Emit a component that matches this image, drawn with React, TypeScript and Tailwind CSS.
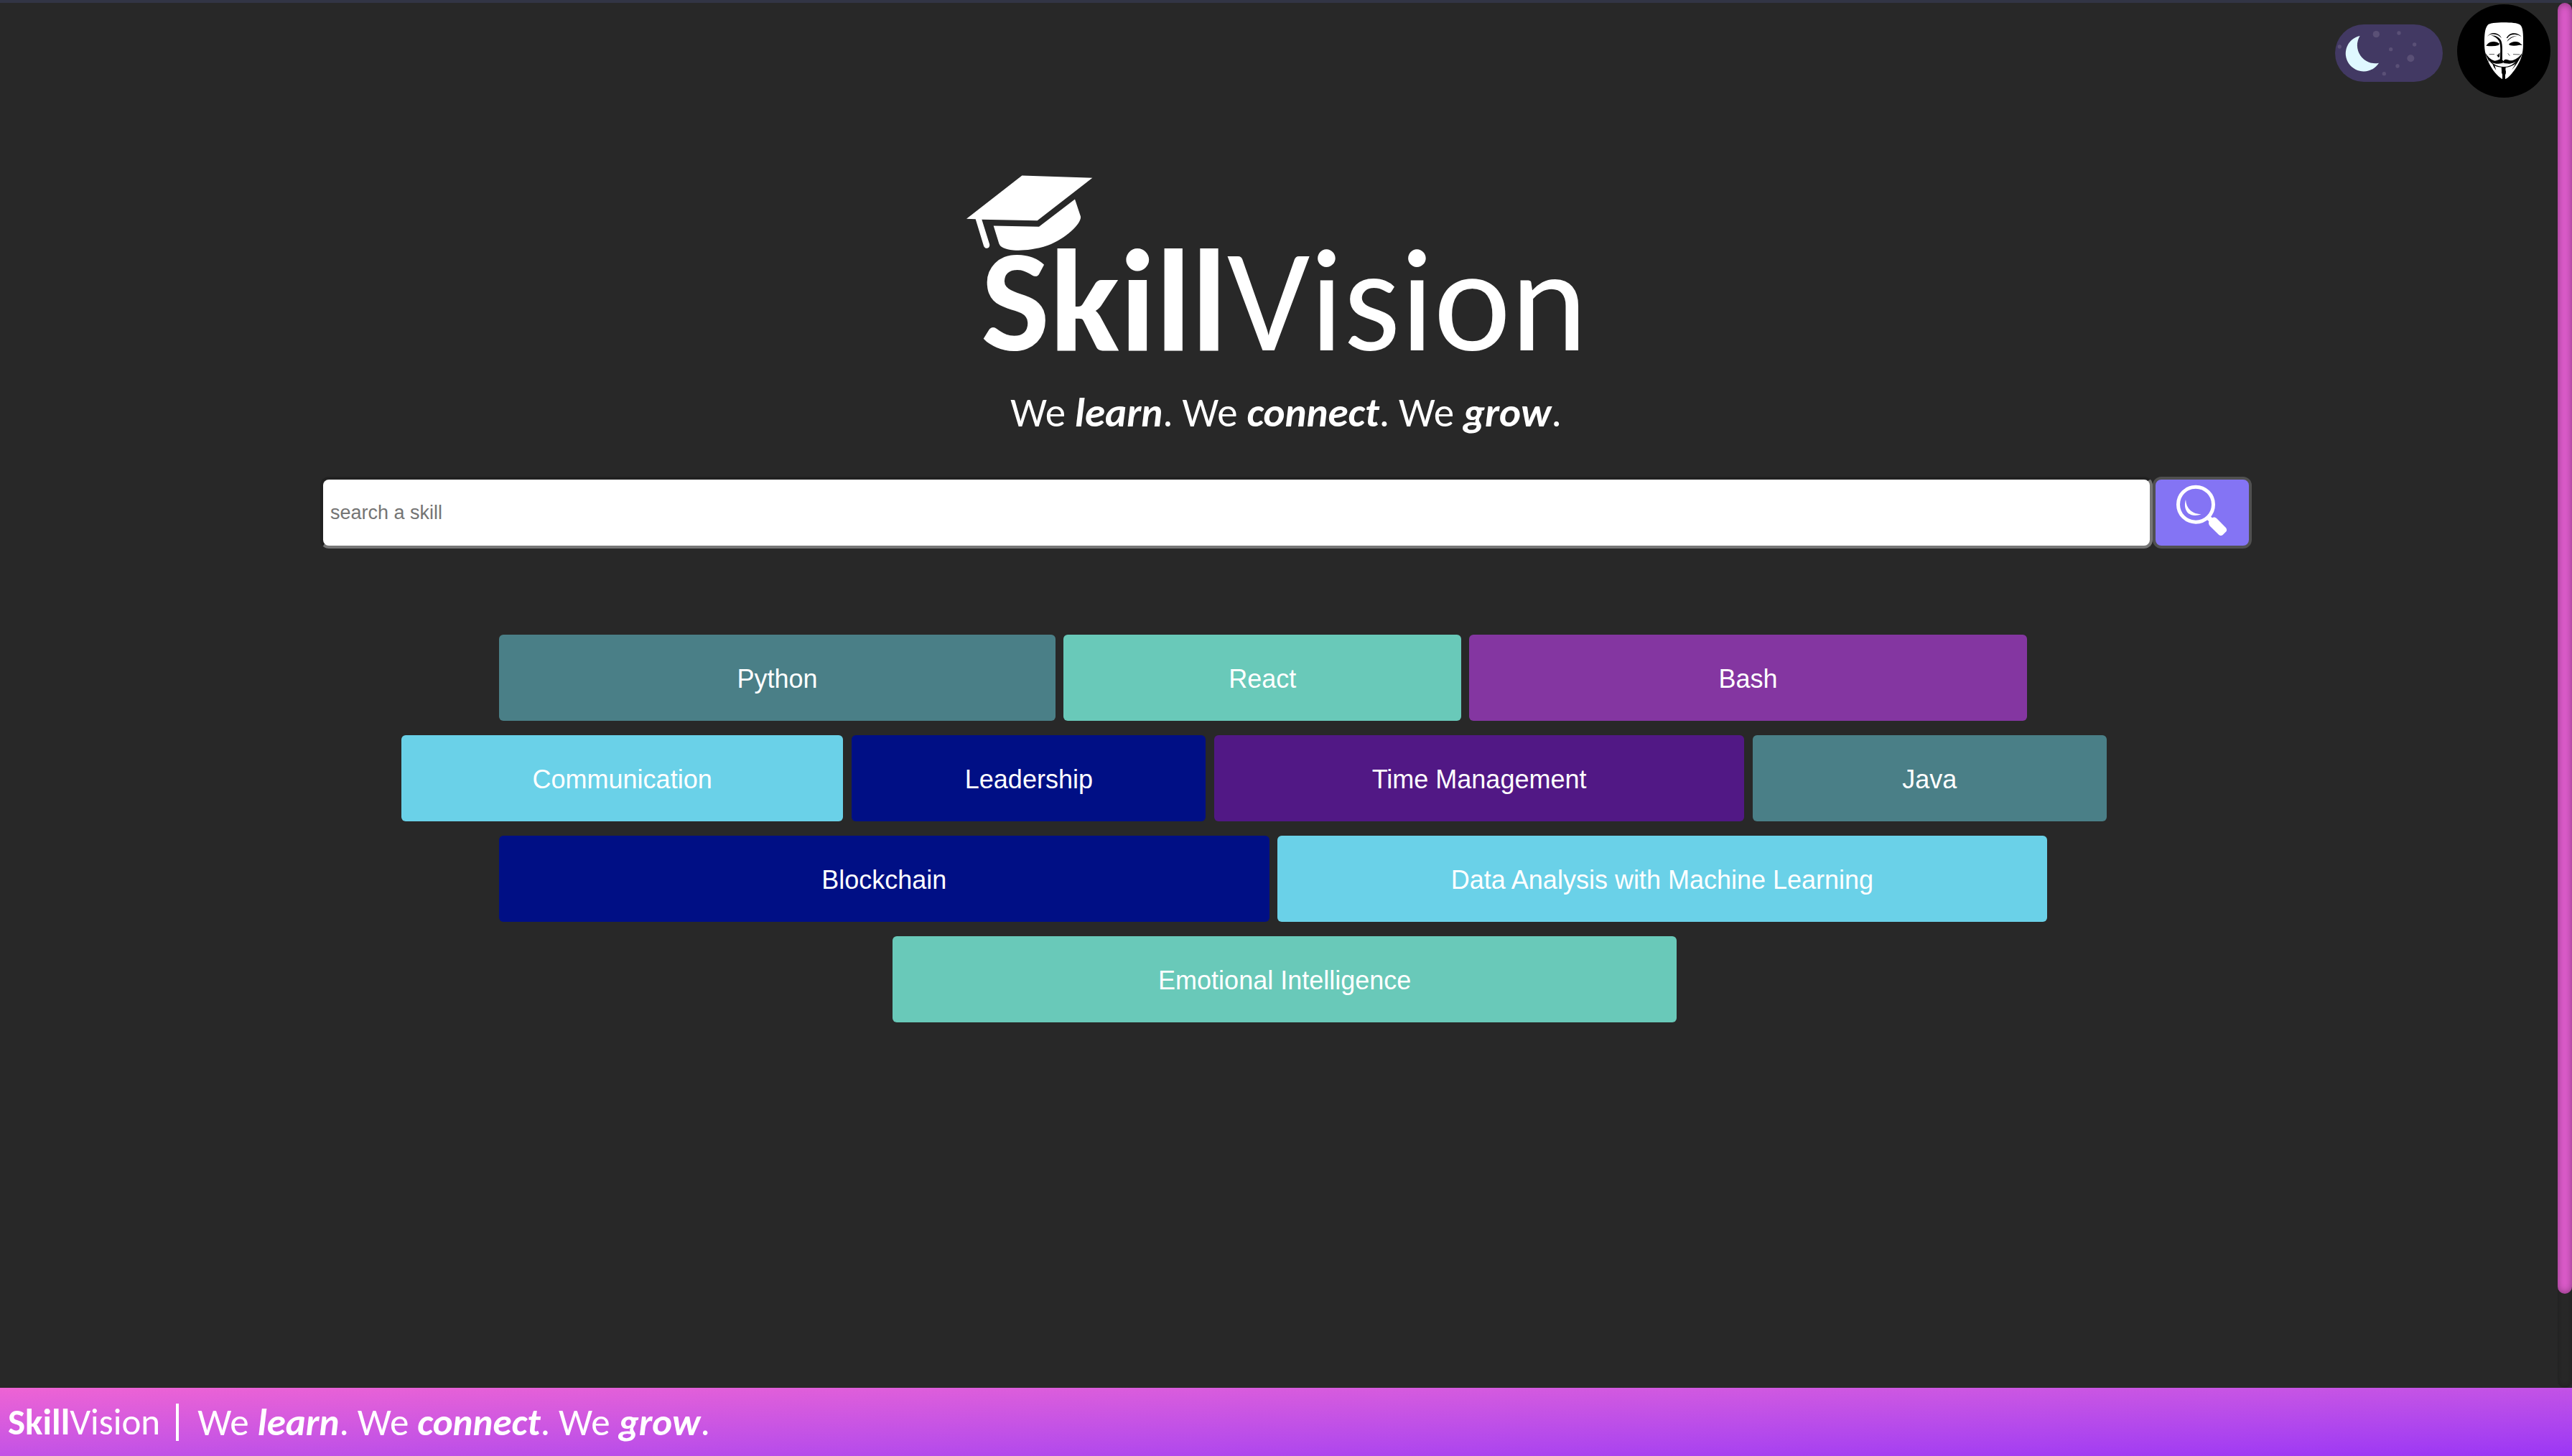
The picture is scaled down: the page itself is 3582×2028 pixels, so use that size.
import type { ReactNode } from "react";

const brandFont = "font-['Calibri','Carlito','Lato',sans-serif]";

function Tagline() {
  return (
    <>
      We <b className="italic">learn</b>. We <b className="italic">connect</b>. We{" "}
      <b className="italic">grow</b>.
    </>
  );
}

function Brand() {
  return (
    <>
      <b>Skill</b>Vision
    </>
  );
}

function GraduationCap({ className }: { className: string }) {
  return (
    <svg className={className} viewBox="32 28 528 314" fill="currentColor" aria-hidden="true">
      <path d="M32 210 264 29 558 39 328 217 96 213 128 315C133 334 110 340 104 323L70 211Z" />
      <path d="M145 239 335 243 485 128 509 200C514 228 450 292 372 321C310 342 258 343 228 341C192 337 173 328 168 313Z" />
    </svg>
  );
}

function ThemeToggle() {
  return (
    <label className="mt-7 block h-20 w-[150px] cursor-pointer overflow-hidden rounded-full bg-[#423963]">
      <input type="checkbox" className="sr-only" defaultChecked aria-label="Dark mode" />
      <svg className="size-full" viewBox="0 0 450 240" aria-hidden="true">
        <g fill="#5a5076">
          <circle cx="172" cy="41" r="14" />
          <circle cx="267" cy="36" r="8" />
          <circle cx="19" cy="93" r="8" />
          <circle cx="233" cy="104" r="8" />
          <circle cx="332" cy="84" r="8" />
          <circle cx="316" cy="142" r="15" />
          <circle cx="261" cy="174" r="8" />
          <circle cx="205" cy="206" r="8" />
        </g>
        <path fill="#dff8ff" d="M104 48A75 75 0 1 0 183 161A75 75 0 0 1 104 48Z" />
      </svg>
    </label>
  );
}

function Avatar() {
  return (
    <button type="button" aria-label="Profile" className="block size-[130px] overflow-hidden rounded-full bg-black">
      <svg className="size-full" viewBox="600 18 390 390" fill="none" aria-hidden="true">
        <path
          fill="#fff"
          d="M727 106C733 96 765 94 795 94C825 94 853 96 864 104C875 114 877 140 876 185C876 225 865 255 845 285C828 309 814 326 802 330L788 330C768 318 747 293 732 262C720 236 714 215 714 180C714 145 716 120 727 106Z"
        />
        <g fill="#000">
          <path d="M725 153C737 137 757 133 773 144Q784 151 786 160Q772 144 756 143Q738 141 725 153Z" />
          <path d="M806 158Q816 142 832 139Q855 137 869 153Q850 141 832 145Q818 147 810 160Z" />
          <path d="M741 148C762 147 777 158 784 170C791 188 788 215 789 248L779 250C781 215 783 190 775 172C768 160 757 152 741 148Z" />
          <path d="M808 174Q820 150 852 149Q824 155 808 174Z" />
          <path d="M721 191L728 183Q736 174 752 174Q766 173 777 182L773 189Q752 195 721 191Z" />
          <path d="M816 185Q828 173 845 174Q858 174 866 184L874 188L860 188Q838 194 820 189Z" />
          <path d="M778 220L777 237L771 240L769 234L765 230L771 229Z" />
          <path d="M717 219C728 238 741 250 757 254C770 254 777 246 785 248Q791 249 793 256Q796 248 803 248C813 248 819 256 833 252C850 246 862 236 871 223C867 241 856 255 839 261C824 268 805 268 793 262C775 269 757 267 745 261C731 252 722 239 717 219Z" />
          <path d="M720 226Q735 254 752 266Q773 279 795 279Q822 278 835 266Q858 248 870 228Q861 252 838 271Q818 283 795 282Q770 282 757 274L763 294Q751 280 748 268Q732 256 720 226Z" />
          <path d="M864 236Q854 265 828 292Q841 274 846 260Z" />
          <path d="M785 281L803 281Q801 290 804 299Q804 309 801 312L801 330L789 330L789 312Q784 304 786 296Z" />
        </g>
        <g stroke="#000" strokeWidth="2">
          <path d="M734 227H756M834 227L862 228M812 223L820 233M727 238L733 258" />
        </g>
        <path stroke="#bbb" strokeWidth="2" d="M776 267H814" />
      </svg>
    </button>
  );
}

function SearchIcon() {
  return (
    <svg className="size-[90px]" viewBox="0 0 270 270" fill="#fff" aria-hidden="true">
      <circle cx="114" cy="104" r="73.5" fill="none" stroke="#fff" strokeWidth="15" />
      <path d="M72 83C59 128 86 163 137 145C98 144 74 121 72 83Z" />
      <path d="M161 167 176 152 182 160C190 156 196 158 202 163L239 200C244 205 244 212 242 216L227 231C221 236 215 234 210 230L174 195C168 189 167 182 169 175Z" />
    </svg>
  );
}

function Row({ className, children }: { className: string; children: ReactNode }) {
  return <div className={`grid ${className}`}>{children}</div>;
}

function Skill({ color, children }: { color: string; children: ReactNode }) {
  return (
    <button type="button" className={`h-[120px] rounded-md pt-1 text-center text-[36px] ${color}`}>
      {children}
    </button>
  );
}

const teal = "bg-[#4a7f87]";
const mint = "bg-[#69c9b9]";
const violet = "bg-[#8436a1]";
const sky = "bg-[#6ad1e8]";
const navy = "bg-[#000f85]";
const indigo = "bg-[#511885]";

export default function App() {
  return (
    <div className="relative flex min-h-screen flex-col border-t-4 border-[#323545] bg-[#282828] font-['Liberation_Sans',Arial,sans-serif] text-white">
      <header className="flex items-start justify-end gap-5 pt-[2px] pr-[30px]">
        <ThemeToggle />
        <Avatar />
      </header>

      <main className="flex grow flex-col pt-[108px]">
        <div className="mx-auto w-[890px]">
          <GraduationCap className="h-[105px] w-[176px]" />
          <h1 className={`-mt-[30px] pl-5 text-[203px] leading-[200px] whitespace-nowrap ${brandFont}`}>
            <Brand />
          </h1>
        </div>
        <p className={`mt-[26px] text-center text-[57px] leading-[60px] ${brandFont}`}>
          <Tagline />
        </p>

        <form className="mx-auto mt-[59px] flex w-[75.1%]" onSubmit={(e) => e.preventDefault()}>
          <input
            type="text"
            aria-label="Search a skill"
            placeholder="search a skill"
            className="h-[100px] min-w-0 grow rounded-xl border-4 border-t-[#212121] border-r-[#767676] border-b-[#767676] border-l-[#212121] bg-white px-2.5 text-[27px] text-black placeholder:text-[#757575]"
          />
          <button
            type="submit"
            aria-label="Search"
            className="flex h-[100px] w-[138px] items-center justify-center rounded-xl border-4 border-[#505050] bg-[#8474f4] pr-1 pb-0.5"
          >
            <SearchIcon />
          </button>
        </form>

        <section aria-label="Skills" className="mt-[120px] grid gap-5">
          <Row className="mr-[21.2%] ml-[19.4%] grid-cols-[775fr_554fr_776fr] gap-[11px]">
            <Skill color={teal}>Python</Skill>
            <Skill color={mint}>React</Skill>
            <Skill color={violet}>Bash</Skill>
          </Row>
          <Row className="mr-[18.1%] ml-[15.6%] grid-cols-[616fr_493fr_738fr_493fr] gap-3">
            <Skill color={sky}>Communication</Skill>
            <Skill color={navy}>Leadership</Skill>
            <Skill color={indigo}>Time Management</Skill>
            <Skill color={teal}>Java</Skill>
          </Row>
          <Row className="mr-[20.4%] ml-[19.4%] grid-cols-2 gap-[11px]">
            <Skill color={navy}>Blockchain</Skill>
            <Skill color={sky}>Data Analysis with Machine Learning</Skill>
          </Row>
          <Row className="mr-[34.8%] ml-[34.7%]">
            <Skill color={mint}>Emotional Intelligence</Skill>
          </Row>
        </section>
      </main>

      <div className="absolute top-0 right-0 bottom-[95px] w-5 rounded-full shadow-[inset_0_0_10px_rgba(0,0,0,0.25)]">
        <div className="h-[93.2%] rounded-full bg-[#df5ccd] shadow-[inset_0_0_12px_rgba(0,0,0,0.4)]" />
      </div>

      <footer
        className={`flex h-[95px] items-center bg-linear-to-br from-[#ee63d4] to-[#9b35f5] pl-[11px] whitespace-nowrap ${brandFont}`}
      >
        <span className="text-[51px] leading-[60px]">
          <Brand />
        </span>
        <span className="ml-[22px] h-[52px] w-1 bg-white" />
        <span className="ml-[26px] text-[53px] leading-[60px]">
          <Tagline />
        </span>
      </footer>
    </div>
  );
}
